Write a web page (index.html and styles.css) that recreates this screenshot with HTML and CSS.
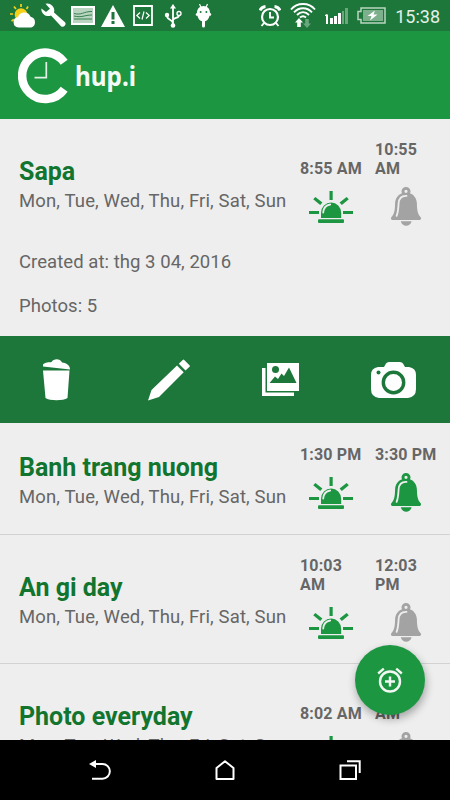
FILE: index.html
```html
<!DOCTYPE html>
<html lang="vi">
<head>
<meta charset="utf-8">
<title>Chup.i</title>
<link rel="stylesheet" href="styles.css">
</head>
<body>
<svg width="0" height="0" class="defs" aria-hidden="true">
  <symbol id="siren" viewBox="0 0 44 32">
    <path d="M20.500 0h3.200v9h-3.200zM0 20h10v3H0zM34 20h10v3H34zM4.200 8.300l2.200-2.400 7 5.700-2.200 2.500zM39.800 8.300l-2.200-2.400-7 5.700 2.200 2.500z"/>
    <path d="M12 27V22a10.100 10.500 0 0 1 20.200 0v5z"/>
    <rect x="9" y="28.300" width="26" height="3.700" rx="1"/>
    <path class="shine" d="M14.200 21.500c.3-4.300 3-7.300 7-8"/>
  </symbol>
  <symbol id="bell" viewBox="0 0 30 39">
    <path fill-rule="evenodd" d="M15 0a4.300 4.300 0 0 1 4 6.200c4.300 1.600 6.700 5.300 6.900 10.400.2 6.400.6 10.500 3.600 13.300.9 1.100.6 3-.8 3H1.300c-1.500 0-1.700-1.900-.8-3 3-2.800 3.400-6.900 3.600-13.300C4.300 11.500 6.700 7.800 11 6.200A4.300 4.300 0 0 1 15 0zm0 2.700a1.600 1.600 0 1 0 0 3.200 1.600 1.600 0 0 0 0-3.200z"/>
    <path d="M9.800 34.300h10.800c-.7 2.800-2.800 4.500-5.400 4.500s-4.700-1.700-5.400-4.500z"/>
    <path class="shine" d="M15.500 8.900c-4.700-.3-7.500 2.700-7.900 7.500-.3 6-.7 9.500-2 12.500"/>
  </symbol>
</svg>

<div class="phone">
  <div class="status">
    <div class="status-left">
      <svg width="27" height="24" viewBox="0 0 27 24"><g stroke="#f7d117" stroke-width="1.700"><path d="M11 0v3M4 2.500l2 2.500M18 2.500L16.500 5M0 10h3M1.500 17l2.500-1.500"/></g><circle cx="11" cy="10.500" r="6.300" fill="#f7d117"/><path d="M8.500 23.500a5.300 5.300 0 0 1-.6-10.500 6.800 6.800 0 0 1 12.700-.3 5.600 5.600 0 0 1 .5 10.800z" fill="#fff"/></svg>
      <svg width="25" height="25" viewBox="0 0 25 25"><path fill="#fff" d="M4.500.8A7 7 0 0 1 13 9.500L24 19.200c2 2.300-1.400 6-4 4L10 12.600A7 7 0 0 1 .4 5.400L5 9l4-3.300z"/></svg>
      <svg width="24" height="19" viewBox="0 0 24 19"><path fill="#b9d5c1" stroke="#fff" stroke-width="2" d="M1 1h22v17H1z"/><path fill="none" stroke="#35814d" d="M3 7.500c8 2 9-2 18-2M3 10c8 2 10-1 18-1M3 13h18"/></svg>
      <svg width="24" height="22" viewBox="0 0 24 22"><path fill="#fff" d="M12 0l12 22H0z"/><path fill="#1d773b" d="M10.500 7h3v7.500h-3zM10.500 16h3v3h-3z"/></svg>
      <svg width="20" height="21" viewBox="0 0 20 21"><path fill="none" stroke="#fff" stroke-width="1.800" d="M1 1h18v19H1z"/><path fill="none" stroke="#fff" stroke-width="1.200" d="M7 7.500l-3.200 3L7 13.500M13 7.500l3.200 3-3.200 3M11 6.500l-2 8"/></svg>
      <svg width="18" height="24" viewBox="0 0 18 24"><path fill="none" stroke="#fff" stroke-width="1.800" d="M9 3v18M9 19C8 15 3 16.500 3 11.500M9 16c1-3 6-1 6-5"/><path fill="#fff" d="M9 0l3 4.500H6z"/><circle cx="9" cy="21.500" r="2.300" fill="#fff"/><circle cx="3" cy="11" r="2.200" fill="#fff"/><circle cx="15" cy="9.500" r="2" fill="none" stroke="#fff" stroke-width="1.400"/></svg>
      <svg width="17" height="24" viewBox="0 0 17 24"><path stroke="#fff" stroke-width="1.200" d="M4.500 0l1.500 3.500M12.500 0L11 3.500"/><path fill="#fff" d="M8.500 2C12.600 2 15 5 15 9c2 .5 1.500 3-.4 2.800-.9 3.300-2.800 5.200-4.600 5.500V22a1.500 1.500 0 0 1-3 0v-4.700c-1.800-.3-3.700-2.200-4.600-5.500C.5 12 0 9.500 2 9c0-4 2.400-7 6.500-7z"/><g fill="#1d773b"><circle cx="5.600" cy="8" r="1"/><circle cx="11.400" cy="8" r="1"/></g></svg>
    </div>
    <div class="status-right">
      <svg width="22" height="22" viewBox="0 0 22 22"><g fill="none" stroke="#fff" stroke-width="2.200"><circle cx="11" cy="12" r="8"/><path stroke-width="1.900" d="M11 7v5.500h4M5 18l-2.500 3M17 18l2.500 3"/><path stroke-width="3" d="M1 5.500C2 3 4 1.700 6.500 1.500M21 5.500C20 3 18 1.700 15.500 1.500"/></g></svg>
      <svg width="26" height="25" viewBox="0 0 26 25"><g fill="none" stroke="#fff" stroke-width="1.900"><path d="M1 6.500C7-.8 19-.8 25 6.500M4 9.300c5-5.500 13-5.500 18 0M7 12c3.500-3.800 8.500-3.800 12 0M10 14.500c2-1.700 4-1.700 6 0"/></g><path fill="#fff" d="M9 15l4 4.500h-2.200V24H7.200v-4.500H5z"/><path fill="#6ba67d" d="M17 25l4-4.500h-2.200V16h-3.600v4.500H13z"/></svg>
      <svg width="23" height="16" viewBox="0 0 23 16"><path fill="#fff" d="M1 6.500h2V16H1zM0 7l2-1v2H0zM5 10h3v6H5zM9 8h3v8H9zM13 5h3v11h-3z"/><path fill="#6ba67d" d="M17 3h2v13h-2zM20 0h3v16h-3z"/></svg>
      <svg width="29" height="17" viewBox="0 0 29 17"><path fill="#1d773b" stroke="#b9d5c1" stroke-width="1.500" d="M4 1h24v15H4v-3.500H1v-8h3z"/><path fill="#7caf8b" d="M6 3h20v11H6z"/><path fill="#fff" d="M18 3.500l-7.500 5.500h4l-1.500 4.500 7.500-6h-4z"/></svg>
      <span class="clock">15:38</span>
    </div>
  </div>

  <header class="header">
    <svg width="51" height="56" viewBox="0 0 51 56"><path fill="none" stroke="#fff" stroke-width="8.500" d="M46.200 14.300A23.200 23.200 0 1 0 46.200 41.300"/><path fill="none" stroke="#e2f0e6" stroke-width="1.700" d="M28.300 14v15.600H16.500"/></svg>
    <h1>hup.i</h1>
  </header>

  <main class="list">
    <section class="row open">
      <div class="info">
        <h2>Sapa</h2>
        <p class="days">Mon, Tue, Wed, Thu, Fri, Sat, Sun</p>
        <p class="created">Created at: thg 3 04, 2016</p>
        <p class="photos">Photos: 5</p>
      </div>
      <div class="times">
        <time>8:55 AM</time><time>10:55 AM</time>
        <svg class="siren"><use href="#siren"/></svg><svg class="bell off"><use href="#bell"/></svg>
      </div>
    </section>

    <nav class="actions">
      <svg width="27" height="42" viewBox="0 0 27 42"><path fill="#fff" d="M0 5.500C2 3 6 3.500 8.500 3c2-3.500 8.500-4 10.500.5 5 .5 8 3 8 7L0 7.500zM0 11.500h26.500L24.500 39c-4 3-18 3-22 0z"/></svg>
      <svg width="42" height="42" viewBox="0 0 42 42"><path fill="#fff" d="M34.700 1a1 1 0 0 1 1.500 0L41.500 6.300a1 1 0 0 1 0 1.500L37.500 11.500l-6.700-6.700zM29 6.500l6.700 6.700L11 38 0 41.500 3.500 31z"/></svg>
      <svg class="gallery" width="37" height="33" viewBox="0 0 37 33"><path fill="#fff" d="M0 5h3.500v24.500h28.500V33H0zM5 0h32v28H5z"/><circle cx="13.500" cy="6.500" r="3.500" fill="#1d773b"/><path fill="#1d773b" d="M7.500 20l5.500-6.500 3 2.500 3.500-5.500 2.500 2.500 5-8.500L34.500 20z"/></svg>
      <svg width="45" height="36" viewBox="0 0 45 36"><path fill="#fff" d="M13 5l2-3.500Q16 0 18 0h11q2 0 3 1.500L34 5h4q7 1 7 8v14q0 8-8 9H8q-8-1-8-9V13q0-7 7-8z"/><circle cx="22.500" cy="20.500" r="10.200" fill="none" stroke="#1d773b" stroke-width="3.400"/><circle cx="7.500" cy="10.500" r="2" fill="#1d773b"/></svg>
    </nav>

    <section class="row single">
      <div class="info">
        <h2>Banh trang nuong</h2>
        <p class="days">Mon, Tue, Wed, Thu, Fri, Sat, Sun</p>
      </div>
      <div class="times">
        <time>1:30 PM</time><time>3:30 PM</time>
        <svg class="siren"><use href="#siren"/></svg><svg class="bell"><use href="#bell"/></svg>
      </div>
    </section>

    <section class="row">
      <div class="info">
        <h2>An gi day</h2>
        <p class="days">Mon, Tue, Wed, Thu, Fri, Sat, Sun</p>
      </div>
      <div class="times">
        <time>10:03 AM</time><time>12:03 PM</time>
        <svg class="siren"><use href="#siren"/></svg><svg class="bell off"><use href="#bell"/></svg>
      </div>
    </section>

    <section class="row">
      <div class="info">
        <h2>Photo everyday</h2>
        <p class="days">Mon, Tue, Wed, Thu, Fri, Sat, Sun</p>
      </div>
      <div class="times">
        <time>8:02 AM</time><time>10:02 AM</time>
        <svg class="siren"><use href="#siren"/></svg><svg class="bell off"><use href="#bell"/></svg>
      </div>
    </section>
  </main>

  <button class="fab" aria-label="Add alarm">
    <svg width="26" height="26" viewBox="0 0 26 26"><g fill="none" stroke="#f1f8f3" stroke-width="2.400"><circle cx="13" cy="14.500" r="10"/><path d="M13 9.500v10M8 14.500h10M1.200 6.500l5.600-4.800M24.800 6.500l-5.600-4.800"/></g></svg>
  </button>

  <footer class="navbar">
    <svg width="22" height="20" viewBox="0 0 22 20"><path fill="none" stroke="#fff" stroke-width="2" d="M5 4h8.500a7.300 7.300 0 0 1 0 14.700H3"/><path fill="#fff" d="M0 4l7-4v8z"/></svg>
    <svg width="20" height="20" viewBox="0 0 20 20"><path fill="none" stroke="#fff" stroke-width="2" stroke-linejoin="round" d="M1.500 19V8L10 1.300 18.500 8v11z"/></svg>
    <svg width="22" height="20" viewBox="0 0 22 20"><path fill="none" stroke="#fff" stroke-width="2" d="M1.500 5.500h15.500V19H1.500zM8 1.300h12.700V13"/></svg>
  </footer>
</div>
</body>
</html>
```
FILE: styles.css
```css
* { box-sizing: border-box; }
body { margin: 0; font-family: Roboto, "Liberation Sans", sans-serif; background: #eee; }
h1, h2, p { margin: 0; }
svg { display: block; flex: none; }
.defs { position: absolute; }

.phone {
  position: relative;
  width: 450px;
  height: 800px;
  display: flex;
  flex-direction: column;
  overflow: hidden;
}

.status {
  height: 31px;
  flex: none;
  display: flex;
  justify-content: space-between;
  align-items: center;
  padding: 0 10px 0 8px;
  background: #1d773b;
}
.status-left {
  display: grid;
  grid-template-columns: repeat(7, 30px);
  place-items: center;
}
.status-right { display: flex; align-items: center; gap: 9px; }
.clock { color: #e4efe7; font-size: 18px; line-height: 29px; padding-top: 2px; }

.header {
  height: 88px;
  flex: none;
  display: flex;
  align-items: center;
  gap: 6px;
  padding: 1px 0 0 18px;
  background: #1d9642;
}
.header h1 {
  color: #f4faf5;
  font: 700 27px/32px "Noto Sans", sans-serif;
  transform: scaleX(.9);
  transform-origin: left;
}

.list { flex: 1; min-height: 0; overflow: hidden; background: #eee; }
.row {
  height: 129px;
  display: flex;
  justify-content: space-between;
  border-bottom: 1px solid #d2d2d2;
}
.row.open { height: 217px; border: 0; }
.row.single { height: 112px; }
.info { padding: 38px 0 0 19px; white-space: nowrap; }
.single .info { padding-top: 30px; }
.info h2 { color: #12752f; font-size: 25px; line-height: 30px; font-weight: 700; }
.info p { color: #666; font-size: 18.500px; line-height: 28px; letter-spacing: .05px; }
.info .days { letter-spacing: .14px; }
.info .created { margin-top: 33px; }
.info .photos { margin-top: 16px; }

.times {
  width: 150px;
  padding-top: 21px;
  display: grid;
  grid-template-columns: 75px 75px;
  grid-template-rows: auto 1fr;
}
.single .times { padding-top: 22px; }
.times time {
  align-self: end;
  width: 65px;
  color: #666;
  font-size: 16px;
  line-height: 19px;
  font-weight: 700;
  letter-spacing: .15px;
}
.siren { width: 44px; height: 32px; margin: 13px 0 0 9px; fill: #1d9642; }
.bell { width: 30px; height: 39px; margin: 9px 0 0 16px; fill: #1d9642; }
.bell.off { fill: #a3a3a3; }
.shine { fill: none; stroke: #eee; stroke-width: 1.800; stroke-linecap: round; }

.actions {
  height: 87px;
  display: grid;
  grid-template-columns: repeat(4, 1fr);
  place-items: center;
  background: #1d773b;
}
.gallery { margin-right: 1px; }

.fab {
  position: absolute;
  left: 355px;
  top: 645px;
  width: 70px;
  height: 70px;
  padding: 0;
  border: 0;
  border-radius: 50%;
  display: grid;
  place-items: center;
  background: #1d9642;
  box-shadow: 1px 4px 8px rgba(0, 0, 0, .32);
}

.navbar {
  height: 60px;
  flex: none;
  display: flex;
  align-items: center;
  justify-content: space-between;
  padding: 0 89px;
  background: #000;
}
```
